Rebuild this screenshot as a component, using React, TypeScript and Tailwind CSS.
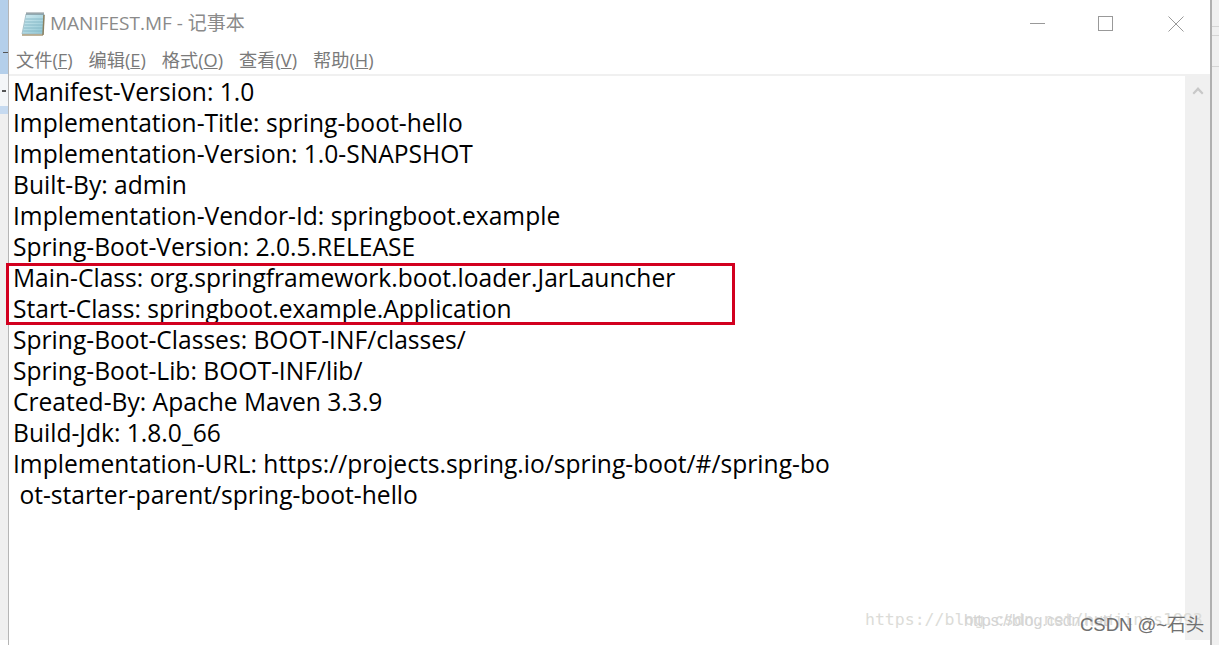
import React from 'react';

const before = [
    'Manifest-Version: 1.0',
    'Implementation-Title: spring-boot-hello',
    'Implementation-Version: 1.0-SNAPSHOT',
    'Built-By: admin',
    'Implementation-Vendor-Id: springboot.example',
    'Spring-Boot-Version: 2.0.5.RELEASE',
];
const marked = [
    'Main-Class: org.springframework.boot.loader.JarLauncher',
    'Start-Class: springboot.example.Application',
];
const after = [
    'Spring-Boot-Classes: BOOT-INF/classes/',
    'Spring-Boot-Lib: BOOT-INF/lib/',
    'Created-By: Apache Maven 3.3.9',
    'Build-Jdk: 1.8.0_66',
    'Implementation-URL: https://projects.spring.io/spring-boot/#/spring-bo',
    ' ot-starter-parent/spring-boot-hello',
];

const menus = [
    ['文件(', 'F', ')'],
    ['编辑(', 'E', ')'],
    ['格式(', 'O', ')'],
    ['查看(', 'V', ')'],
    ['帮助(', 'H', ')'],
];

const NotepadIcon = () => (
    <svg width="24" height="25" viewBox="0 0 24 25" className="shrink-0">
        <defs>
            <linearGradient id="pad" x1="0" y1="0" x2="1" y2="1">
                <stop offset="0" stopColor="#d3ecf2" />
                <stop offset="1" stopColor="#8fc5d2" />
            </linearGradient>
        </defs>
        <path d="M5 3h18l-1 20H1z" fill="url(#pad)" stroke="#9db8c0" strokeWidth="0.8" />
        <path d="M4.600 8h17.500M4 11h18M3.400 14h18.500M2.800 17h19M2.200 20h19.500" stroke="#7fb3c1" strokeWidth="0.8" />
        <path d="M5.500 2.500h17" stroke="#5b6a72" strokeWidth="2.500" strokeDasharray="1 1" />
        <path d="M1 24h21" stroke="#a89a78" strokeWidth="1.500" />
        <path d="M23 4l-1 20" stroke="#8a8060" strokeWidth="1.500" />
    </svg>
);

const Line = ({ text }: { text: string }) => (
    <div className="h-[31px] leading-[31px] whitespace-pre">{text}</div>
);

export default function App() {
    return (
        <div className="relative flex h-[645px] w-[1219px] overflow-hidden bg-white font-['Open_Sans','Noto_Sans_CJK_SC',sans-serif]">
            {/* left edge of the window behind */}
            <div className="flex w-[9px] shrink-0 flex-col border-r border-[#b5b5b5]">
                <div className="relative h-[74px] bg-[#b4cfea]">
                    <div className="absolute left-[3px] top-[52px] h-px w-[5px] bg-[#555555]" />
                </div>
                <div className="relative h-[32px] bg-[#f4f6f8]">
                    <div className="absolute left-[2px] top-[16px] h-[2px] w-[4px] bg-[#555555]" />
                </div>
                <div className="h-[8px] bg-[#c6daf0]" />
                <div className="h-[526px] bg-[#efefef]" />
            </div>

            <div className="flex h-[640px] min-w-0 flex-1 flex-col">
                <div className="flex h-[47px] shrink-0 items-center">
                    <div className="ml-[12px]">
                        <NotepadIcon />
                    </div>
                    <div className="ml-[5px] text-[19px] text-[#8a8a8a]">MANIFEST.MF - 记事本</div>
                    <div className="ml-auto flex items-center">
                        <div className="mr-[53px] h-px w-[15px] bg-[#999999]" />
                        <div className="mr-[55px] size-[15px] border border-[#999999]" />
                        <svg width="16" height="16" viewBox="0 0 16 16" className="mr-[26px]">
                            <path d="M.5.5l15 15M15.500.5l-15 15" stroke="#999999" strokeWidth="1" />
                        </svg>
                    </div>
                </div>

                <div className="flex h-[27px] shrink-0 items-start gap-[16px] pl-[7px] text-[18.2px] leading-[27px] text-[#7a7a7a]">
                    {menus.map(([a, b, c]) => (
                        <div key={a}>
                            {a}
                            <span className="underline">{b}</span>
                            {c}
                        </div>
                    ))}
                </div>

                <div className="flex min-h-0 flex-1 border-t-2 border-[#f0f0f0]">
                    <div className="flex-1 pl-[4px] text-[24.6px] text-black">
                        {before.map(t => <Line key={t} text={t} />)}
                        <div className="relative">
                            {marked.map(t => <Line key={t} text={t} />)}
                            <div className="absolute left-[-7px] top-[1px] h-[62px] w-[729px] border-[3px] border-[#d2001f]" />
                        </div>
                        {after.map(t => <Line key={t} text={t} />)}
                    </div>
                    <div className="flex w-[25px] shrink-0 justify-center bg-[#f0f0f0] pt-[10px]">
                        <svg width="12" height="10" viewBox="0 0 12 10">
                            <path d="M6 1l5.500 6-1.500 1.500L6 4.500 2 8.500.5 7z" fill="#c8c8c8" />
                        </svg>
                    </div>
                </div>
            </div>

            {/* right edge of the window behind */}
            <div className="flex w-[9px] shrink-0 flex-col border-l-2 border-[#b0b0b0] bg-[#f0f0f0]">
                <div className="h-[26px]" />
                <div className="h-[9px] border-t border-[#d4d4d4]" />
                <div className="h-[32px] border-y border-[#d4d4d4]" />
            </div>

            {/* watermarks */}
            <div className="absolute left-[865px] top-[609px] font-['DejaVu_Sans_Mono',monospace] text-[16.5px] leading-[22px] text-[#dcdcd8] whitespace-nowrap">
                https://blog.csdn.net/hunjinxs1993
            </div>
            <div className="absolute left-[964px] top-[612px] font-['Liberation_Sans',sans-serif] text-[16px] leading-[18px] text-[#d4d4d4] whitespace-nowrap">
                https://blog.csdn.net/
            </div>
            <div className="absolute left-[1080px] top-[613px] font-['Liberation_Sans','Noto_Sans_CJK_SC',sans-serif] text-[18.5px] leading-[24px] text-[#707070] whitespace-nowrap">
                CSDN @~石头
            </div>
        </div>
    );
}
